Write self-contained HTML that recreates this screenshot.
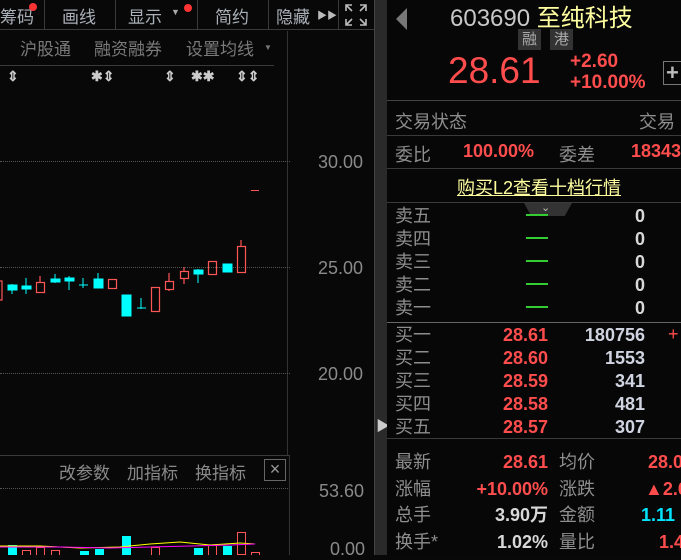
<!DOCTYPE html>
<html><head><meta charset="utf-8"><style>
*{margin:0;padding:0;box-sizing:border-box}
body{width:681px;height:555px;background:#080808;overflow:hidden;position:relative;font-family:"Liberation Sans","Noto Sans CJK SC",sans-serif;color:#9a9a9a}
.a{position:absolute;white-space:nowrap}
.g{color:#8c8c8c}
.r{color:#ff4d4d}
.w{color:#d8d8d8}
.lbl{font-size:18px;color:#8e8e8e}
.num{font-size:18px;font-weight:bold}
.hl{position:absolute;height:1px;background:#3a3a3a}
.dot{position:absolute;height:0;border-top:1px dotted #555}
.tb{font-size:17px;color:#aab0b8}
</style></head><body>
<!-- toolbar -->
<div class="a" style="left:0;top:0;width:374px;height:30px;border-bottom:1px solid #3a3a3a"></div>
<div class="a" style="left:44px;top:0;width:1px;height:30px;background:#3a3a3a"></div>
<div class="a" style="left:115px;top:0;width:1px;height:30px;background:#3a3a3a"></div>
<div class="a" style="left:197px;top:0;width:1px;height:30px;background:#3a3a3a"></div>
<div class="a" style="left:268px;top:0;width:1px;height:30px;background:#3a3a3a"></div>
<div class="a" style="left:338px;top:0;width:1px;height:30px;background:#3a3a3a"></div>
<div class="a tb" style="left:0;top:3px">筹码</div>
<div class="a" style="left:29px;top:3px;width:8px;height:8px;border-radius:50%;background:#f33"></div>
<div class="a tb" style="left:62px;top:3px">画线</div>
<div class="a tb" style="left:128px;top:3px">显示</div>
<div class="a" style="left:171px;top:7px;font-size:9px;color:#aaa">▼</div>
<div class="a" style="left:184px;top:4px;width:8px;height:8px;border-radius:50%;background:#f33"></div>
<div class="a tb" style="left:215px;top:3px">简约</div>
<div class="a tb" style="left:276px;top:3px">隐藏</div>
<div class="a" style="left:317px;top:7px;font-size:10px;color:#bbb">▶▶</div>
<svg class="a" style="left:344px;top:3px" width="24" height="24" stroke="#bbb" stroke-width="1.6" fill="none"><path d="M2 8V2h6M2 2l6 6M16 2h6v6M22 2l-6 6M2 16v6h6M2 22l6-6M22 16v6h-6M22 22l-6-6"/></svg>
<!-- tab row -->
<div class="a" style="left:20px;top:35px;font-size:17px;color:#7a7a7a">沪股通</div>
<div class="a" style="left:94px;top:35px;font-size:17px;color:#7a7a7a">融资融券</div>
<div class="a" style="left:186px;top:35px;font-size:17px;color:#7a7a7a">设置均线</div>
<div class="a" style="left:264px;top:43px;font-size:8px;color:#777">▼</div>
<div class="hl" style="left:0;top:65px;width:274px"></div>
<div class="a" style="left:287px;top:31px;width:1px;height:425px;background:#333"></div>
<div class="a" style="left:0;top:68px;font-size:14px;font-weight:bold;color:#ccc;letter-spacing:0">
<span class="a" style="left:7px">⇕</span><span class="a" style="left:91px">✱⇕</span><span class="a" style="left:164px">⇕</span><span class="a" style="left:191px">✱✱</span><span class="a" style="left:236px">⇕⇕</span></div>
<!-- grid -->
<div class="dot" style="left:0;top:161px;width:290px"></div>
<div class="dot" style="left:0;top:267px;width:290px"></div>
<div class="dot" style="left:0;top:373px;width:290px"></div>
<div class="a" style="left:318px;top:152px;font-size:18px;color:#8a8a8a">30.00</div>
<div class="a" style="left:318px;top:258px;font-size:18px;color:#8a8a8a">25.00</div>
<div class="a" style="left:318px;top:364px;font-size:18px;color:#8a8a8a">20.00</div>
<svg class="a" style="left:0;top:230px" width="288" height="90">
<g fill="#00ffff" stroke="#00ffff" stroke-width="1">
<line x1="12" y1="54" x2="12" y2="64"/><rect x="8" y="55" width="9" height="5"/>
<line x1="26" y1="48" x2="26" y2="64"/><rect x="22" y="56" width="9" height="3"/>
<line x1="55" y1="44" x2="55" y2="53"/><rect x="51" y="49" width="9" height="3"/>
<line x1="69" y1="46" x2="69" y2="60"/><rect x="65" y="48" width="9" height="3"/>
<line x1="83" y1="48" x2="83" y2="58"/><line x1="79" y1="55" x2="88" y2="55"/>
<line x1="98" y1="43" x2="98" y2="58"/><rect x="94" y="49" width="9" height="9"/>
<rect x="122" y="65" width="9" height="21"/>
<line x1="141" y1="68" x2="141" y2="79"/><line x1="137" y1="78" x2="146" y2="78"/>
<line x1="198" y1="39" x2="198" y2="53"/><rect x="194" y="40" width="9" height="4"/>
<rect x="223" y="34" width="9" height="8"/>
</g>
<g fill="none" stroke="#ff5555" stroke-width="1.2">
<rect x="-3" y="51" width="5" height="19"/>
<line x1="40" y1="46" x2="40" y2="52"/><rect x="36.5" y="52.5" width="8" height="10"/>
<rect x="108.5" y="49.5" width="8" height="9"/>
<rect x="151.5" y="57.5" width="8" height="24"/>
<line x1="169" y1="43" x2="169" y2="51"/><line x1="169" y1="59" x2="169" y2="61"/><rect x="165.5" y="51.5" width="8" height="8"/>
<line x1="184" y1="37" x2="184" y2="41"/><line x1="184" y1="48" x2="184" y2="54"/><rect x="180.5" y="41.5" width="8" height="7"/>
<rect x="208.5" y="31.5" width="8" height="13"/>
<line x1="241" y1="10" x2="241" y2="16"/><rect x="237.5" y="16.5" width="8" height="26"/>
</g></svg>
<div class="a" style="left:251px;top:190px;width:8px;height:1px;background:#ff5555"></div>
<!-- lower panel -->
<div class="hl" style="left:0;top:455px;width:290px"></div>
<div class="a" style="left:59px;top:459px;font-size:17px;color:#8a8a8a">改参数</div>
<div class="a" style="left:127px;top:459px;font-size:17px;color:#8a8a8a">加指标</div>
<div class="a" style="left:195px;top:459px;font-size:17px;color:#8a8a8a">换指标</div>
<div class="a" style="left:264px;top:459px;width:22px;height:22px;border:1px solid #666;color:#999;font-size:18px;line-height:19px;text-align:center">×</div>
<div class="dot" style="left:0;top:488px;width:290px"></div>
<div class="a" style="left:289px;top:456px;width:1px;height:99px;background:#333"></div>
<div class="a" style="left:319px;top:481px;font-size:18px;color:#8a8a8a">53.60</div>
<div class="a" style="left:330px;top:539px;font-size:18px;color:#8a8a8a">0.00</div>
<svg class="a" style="left:0;top:530px" width="288" height="25">
<g fill="#00ffff"><rect x="8" y="15" width="9" height="10"/><rect x="122" y="6" width="9" height="19"/><rect x="80" y="21" width="9" height="4"/><rect x="95" y="19" width="9" height="6"/><rect x="194" y="18" width="9" height="7"/><rect x="223" y="16" width="9" height="9"/></g>
<g fill="none" stroke="#ff5555"><rect x="22.5" y="20.5" width="8" height="6"/><rect x="36.5" y="17.5" width="8" height="9"/><rect x="51.5" y="20.5" width="8" height="6"/><rect x="237.5" y="2.5" width="8" height="22"/><rect x="151.5" y="17.5" width="8" height="8"/><rect x="208.5" y="15.5" width="8" height="10"/><rect x="251.5" y="22.5" width="8" height="4"/></g>
<polyline fill="none" stroke="#ffff00" points="0,16 40,16 80,18 120,17 150,14 180,12 210,15 240,13 255,14"/>
<polyline fill="none" stroke="#ff00ff" points="0,17 60,17 110,18 150,17 190,16 230,15 255,14"/>
</svg>
<!-- divider -->
<div class="a" style="left:374px;top:0;width:13px;height:555px;background:#2a2a2a"></div>
<div class="a" style="left:374px;top:0;width:1px;height:555px;background:#444"></div>
<div class="a" style="left:376px;top:416px;font-size:14px;color:#ccc">▶</div>
<!-- right panel -->
<div class="a" style="left:387px;top:0;width:294px;height:555px;background:#070707"></div>
<div class="a" style="left:396px;top:8px;width:0;height:0;border-top:11px solid transparent;border-bottom:11px solid transparent;border-right:11px solid #777"></div>
<div class="a" style="left:450px;top:-2px;font-size:24px;color:#c8c8c8">603690 <span style="color:#ffffa0">至纯科技</span></div>
<div class="a" style="left:518px;top:29px;width:23px;height:21px;background:#333;color:#aaa;font-size:15px;text-align:center;line-height:21px">融</div>
<div class="a" style="left:550px;top:29px;width:23px;height:21px;background:#333;color:#aaa;font-size:15px;text-align:center;line-height:21px">港</div>
<div class="a r" style="left:448px;top:50px;font-size:37px">28.61</div>
<div class="a r" style="left:570px;top:51px;font-size:19px;font-weight:bold;line-height:21px">+2.60<br>+10.00%</div>
<div class="a" style="left:663px;top:61px;width:22px;height:24px;border:1px solid #777;color:#bbb;font-size:22px;line-height:21px;padding-left:2px;font-weight:bold">+</div>
<div class="hl" style="left:387px;top:100px;width:294px;background:#444"></div>
<div class="a lbl" style="left:395px;top:108px">交易状态</div>
<div class="a lbl w" style="left:639px;top:108px">交易</div>
<div class="hl" style="left:387px;top:135px;width:294px"></div>
<div class="a lbl" style="left:395px;top:141px">委比</div>
<div class="a num r" style="left:463px;top:141px">100.00%</div>
<div class="a lbl" style="left:559px;top:141px">委差</div>
<div class="a num r" style="left:631px;top:141px">18343</div>
<div class="hl" style="left:387px;top:168px;width:294px"></div>
<div class="a" style="left:457px;top:174px;font-size:18px;color:#ffffa0;text-decoration:underline">购买L2查看十档行情</div>
<div class="hl" style="left:387px;top:202px;width:294px"></div>
<div class="a" style="left:524px;top:203px;width:48px;height:13px;background:#333;clip-path:polygon(0 0,100% 0,85% 100%,15% 100%)"></div>
<div class="a" style="left:541px;top:201px;font-size:11px;color:#bbb">⌄</div>
<div class="a" style="left:395px;top:205px;font-size:18px;line-height:23px;color:#8e8e8e">卖五<br>卖四<br>卖三<br>卖二<br>卖一</div>
<div class="a" style="left:526px;top:214px;width:22px;height:2px;background:#3c3;box-shadow:0 23px #3c3,0 46px #3c3,0 69px #3c3,0 92px #3c3"></div>
<div class="a num w" style="left:600px;top:205px;width:45px;text-align:right;line-height:23px">0<br>0<br>0<br>0<br>0</div>
<div class="hl" style="left:387px;top:322px;width:294px;background:#666"></div>
<div class="a" style="left:395px;top:324px;font-size:18px;line-height:23px;color:#8e8e8e">买一<br>买二<br>买三<br>买四<br>买五</div>
<div class="a num r" style="left:480px;top:324px;width:68px;text-align:right;line-height:23px">28.61<br>28.60<br>28.59<br>28.58<br>28.57</div>
<div class="a num w" style="left:560px;top:324px;width:85px;text-align:right;line-height:23px;color:#cfd4e0">180756<br>1553<br>341<br>481<br>307</div>
<div class="a r" style="left:668px;top:324px;font-size:18px">+</div>
<div class="hl" style="left:387px;top:438px;width:294px"></div>
<div class="a" style="left:395px;top:449px;font-size:18px;line-height:26.5px;color:#8e8e8e">最新<br>涨幅<br>总手<br>换手*</div>
<div class="a num" style="left:440px;top:449px;width:108px;text-align:right;line-height:26.5px"><span class="r">28.61</span><br><span class="r">+10.00%</span><br><span class="w">3.90万</span><br><span class="w">1.02%</span></div>
<div class="a" style="left:559px;top:449px;font-size:18px;line-height:26.5px;color:#8e8e8e">均价<br>涨跌<br>金额<br>量比</div>
<div class="a num" style="left:648px;top:449px;line-height:26.5px"><span class="r">28.0</span><br><span class="r" style="margin-left:-3px">▲2.6</span><br><span style="color:#00e5ff;margin-left:-7px">1.11</span><br><span class="r" style="margin-left:11px">1.4</span></div>
</body></html>
